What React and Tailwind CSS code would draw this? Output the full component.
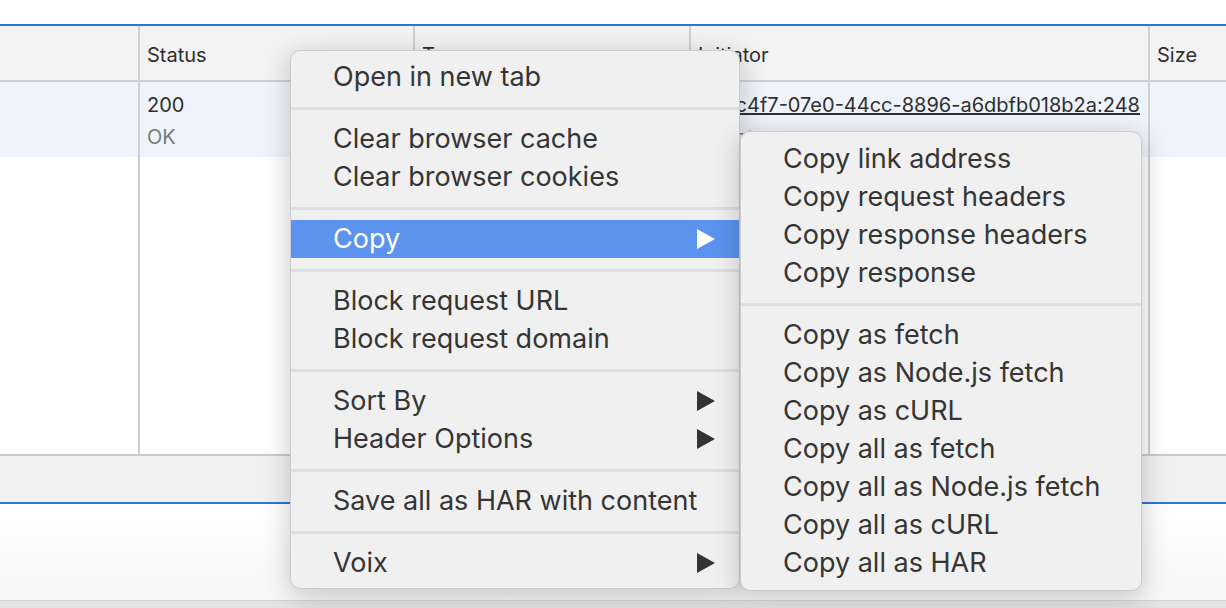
import React from 'react';

const font = { fontFamily: 'Inter, "Noto Sans", sans-serif' };

const Arrow = ({ white }) => (
    <svg width="18" height="20" viewBox="0 0 18 20" className="shrink-0">
        <polygon points="0,0 18,10 0,20" fill={white ? '#ffffff' : '#333333'} />
    </svg>
);

const Sep = () => (
    <div className="h-6 flex items-center">
        <div className="h-[3px] w-full bg-[#dedede]" />
    </div>
);

const Item = ({ label, sub, active }) => (
    <div
        className={`h-[38px] flex items-center justify-between pl-[42px] pr-6 ${
            active ? 'bg-[#5b93ee] text-white' : 'text-[#353535]'
        }`}
    >
        <span className="whitespace-nowrap">{label}</span>
        {sub && <Arrow white={active} />}
    </div>
);

const mainMenu = [
    [{ label: 'Open in new tab' }],
    [{ label: 'Clear browser cache' }, { label: 'Clear browser cookies' }],
    [{ label: 'Copy', sub: true, active: true }],
    [{ label: 'Block request URL' }, { label: 'Block request domain' }],
    [{ label: 'Sort By', sub: true }, { label: 'Header Options', sub: true }],
    [{ label: 'Save all as HAR with content' }],
    [{ label: 'Voix', sub: true }],
];

const copyMenu = [
    ['Copy link address', 'Copy request headers', 'Copy response headers', 'Copy response'],
    [
        'Copy as fetch',
        'Copy as Node.js fetch',
        'Copy as cURL',
        'Copy all as fetch',
        'Copy all as Node.js fetch',
        'Copy all as cURL',
        'Copy all as HAR',
    ],
];

const Menu = ({ groups, className }) => (
    <div
        className={`absolute rounded-[10px] bg-[#f0f0f0] border border-black/15 shadow-[0_6px_28px_rgba(0,0,0,0.22)] overflow-hidden text-[27px] ${className}`}
        style={font}
    >
        {groups.map((group, i) => (
            <React.Fragment key={i}>
                {i > 0 && <Sep />}
                {group.map((item) => (
                    <Item key={item.label} {...item} />
                ))}
            </React.Fragment>
        ))}
    </div>
);

export default function App() {
    return (
        <div className="relative w-[1226px] h-[608px] overflow-hidden bg-white text-[20px] text-[#303030]" style={font}>
            <div className="h-6" />
            <div className="h-[2px] bg-[#2f72e0]" />

            {/* header */}
            <div className="flex h-14 bg-[#f3f3f3] border-b-2 border-[#d0d0d0]">
                <div className="w-[140px] border-r-2 border-[#d0d0d0]" />
                <div className="w-[275px] border-r-2 border-[#d0d0d0] pl-[7px] pt-1 flex items-center">Status</div>
                <div className="w-[276px] border-r-2 border-[#d0d0d0] pl-[7px] pt-1 flex items-center">Type</div>
                <div className="w-[459px] border-r-2 border-[#d0d0d0] pl-[7px] pt-1 flex items-center">Initiator</div>
                <div className="flex-1 pl-[7px] pt-1 flex items-center">Size</div>
            </div>

            {/* body */}
            <div className="flex h-[372px]">
                <div className="w-[140px] border-r-2 border-[#d0d0d0] flex flex-col">
                    <div className="h-[75px] bg-[#eff3fb]" />
                </div>
                <div className="w-[275px] border-r-2 border-[#d0d0d0] flex flex-col">
                    <div className="h-[75px] bg-[#eff3fb] pl-[7px] pt-[7px] leading-8">
                        <div>200</div>
                        <div className="text-[#7b7b7b]">OK</div>
                    </div>
                </div>
                <div className="w-[276px] border-r-2 border-[#d0d0d0] flex flex-col">
                    <div className="h-[75px] bg-[#eff3fb] pl-[7px] pt-[7px] leading-8">
                        <div>fetch</div>
                    </div>
                </div>
                <div className="w-[459px] border-r-2 border-[#d0d0d0] flex flex-col">
                    <div className="h-[75px] bg-[#eff3fb] pl-[7px] pr-2 pt-[7px] leading-8 overflow-hidden">
                        <div className="flex justify-end whitespace-nowrap">
                            <span className="underline">VM45:1 blob:devtools://6a9c4f7-07e0-44cc-8896-a6dbfb018b2a:248</span>
                        </div>
                        <div className="text-[#7b7b7b]">Script</div>
                    </div>
                </div>
                <div className="flex-1 flex flex-col">
                    <div className="h-[75px] bg-[#eff3fb]" />
                </div>
            </div>

            {/* footer */}
            <div className="h-[2px] bg-[#cbcbcb]" />
            <div className="h-[46px] bg-[#f1f1f1]" />
            <div className="h-[2px] bg-[#2f72e0]" />
            <div className="h-24 bg-gradient-to-b from-white to-[#f7f7f7]" />
            <div className="h-2 bg-[#e3e3e3] border-t border-[#d6d6d6]" />

            <Menu groups={mainMenu} className="left-[290px] top-[50px] w-[450px] pt-[7px] pb-[6px]" />
            <Menu
                groups={copyMenu.map((g) => g.map((label) => ({ label })))}
                className="left-[740px] top-[131px] w-[402px] pt-2 pb-2"
            />
        </div>
    );
}
